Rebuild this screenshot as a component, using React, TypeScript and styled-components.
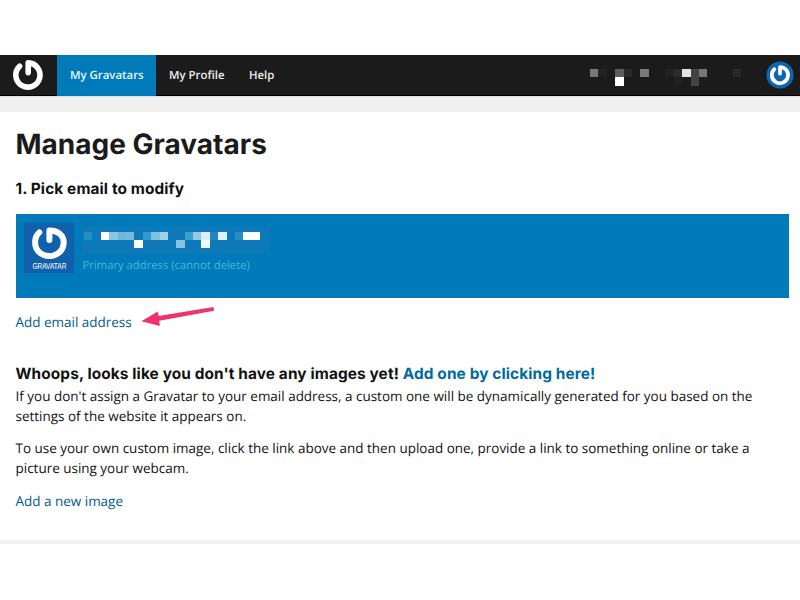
import React from "react";
import styled, { createGlobalStyle } from "styled-components";

const GlobalStyle = createGlobalStyle`
  * { box-sizing: border-box; }
  body { margin: 0; background: #fff; text-rendering: geometricPrecision; }
  h1, h2, h3, p { margin: 0; font-weight: inherit; }
  a { text-decoration: none; color: inherit; }
  svg { overflow: visible; }
`;

const Page = styled.div`
  width: 800px;
  height: 600px;
  overflow: hidden;
  padding-top: 55px;
  background: #fff;
  color: #111;
  font-family: "Open Sans", sans-serif;
`;

const Header = styled.header`
  display: flex;
  align-items: stretch;
  height: 41px;
  background: #1b1b1b;
  box-shadow: inset 0 -1px 0 #000;
`;

const Brand = styled.a`
  width: 57px;
  padding: 5px 0 0 13px;
`;

const NavLink = styled.a<{ $active?: boolean; $width: number }>`
  width: ${(p) => p.$width}px;
  padding-left: 13px;
  background: ${(p) => (p.$active ? "#007ab8" : "transparent")};
  color: ${(p) => (p.$active ? "#e9f5fb" : "#eee")};
  font-size: 11.4px;
  font-weight: 600;
  line-height: 42px;
  white-space: nowrap;
`;

const Account = styled.div`
  display: flex;
  align-items: flex-start;
  margin-left: auto;
  padding: 6px 6px 0 0;
`;

const Mosaic = styled.div<{ $cols: number }>`
  display: grid;
  grid-template-columns: repeat(${(p) => p.$cols}, 8.4px);
  grid-auto-rows: 8.4px;
`;

const Cell = styled.span<{ $color: string; $col: number; $row: number }>`
  grid-column: ${(p) => p.$col + 1};
  grid-row: ${(p) => p.$row + 1};
  background: ${(p) => p.$color};
`;

const AccountName = styled.div`
  padding-top: 8px;
  margin-right: 25px;
`;

const Strip = styled.div`
  height: 16px;
  background: #f0f0f0;
  border-top: 1px solid #dedede;
`;

const Main = styled.main`
  height: 432px;
  padding: 15px 11px 0 15.5px;
  border-bottom: 4px solid #f0f0f0;
`;

const Title = styled.h1`
  font: 700 28px/34px Inter, sans-serif;
  color: #1b1b1b;
  white-space: nowrap;
`;

const Subheading = styled.h2`
  font: 700 15.4px/20px Inter, sans-serif;
  letter-spacing: 0.11px;
  white-space: nowrap;
`;

const Step = styled(Subheading)`
  margin-top: 18px;
`;

const EmailCard = styled.section`
  display: flex;
  height: 84px;
  margin-top: 15px;
  padding: 8.5px;
  background: #007ab8;
`;

const EmailInfo = styled.div`
  margin-left: 8.5px;
`;

const HiddenEmail = styled.div`
  width: 186px;
  height: 26px;
  margin-top: 4px;
  padding: 5px 0 0 1.5px;
  background: #0e78b8;
`;

const Note = styled.p`
  margin-top: 3px;
  color: #45b8e0;
  font-size: 11.27px;
  line-height: 20px;
  white-space: nowrap;
`;

const AddEmail = styled.div`
  display: flex;
  align-items: flex-start;
  height: 24px;
  margin-top: 6px;
`;

const TextLink = styled.a`
  color: #005a92;
  font-size: 13.47px;
  line-height: 20px;
  white-space: nowrap;
`;

const EmailLink = styled(TextLink)`
  width: 125px;
  padding-top: 8px;
`;

const Notice = styled(Subheading)`
  margin-top: 36px;
`;

const NoticeLink = styled.a`
  color: #0069a0;
`;

const Copy = styled.p<{ $top: number }>`
  margin-top: ${(p) => p.$top}px;
  font-size: 13.47px;
  line-height: 20px;
  white-space: nowrap;
`;

const NewImage = styled.div`
  margin-top: 12px;
  line-height: 20px;
`;

type Pixel = [number, number, string];

const namePixels: Pixel[] = [
  [0, 0, "#777"], [1, 0, "#232323"], [3, 0, "#5d5d5d"], [4, 0, "#292929"],
  [6, 0, "#7a7a7a"], [9, 0, "#222"], [10, 0, "#2c2c2c"], [11, 0, "#e3e3e3"],
  [12, 0, "#434343"], [13, 0, "#777"], [17, 0, "#292929"],
  [3, 1, "#fff"], [10, 1, "#202020"], [12, 1, "#434343"],
];

const emailPixels: Pixel[] = [
  [0, 0, "#2290c4"], [2, 0, "#fff"], [3, 0, "#8cc5e1"], [4, 0, "#6db8da"],
  [5, 0, "#78b7d8"], [7, 0, "#2f9bcb"], [8, 0, "#7fc0de"], [9, 0, "#9fd0e5"],
  [12, 0, "#3aa0ce"], [13, 0, "#93cae3"], [14, 0, "#d9eef6"], [15, 0, "#2186bf"],
  [16, 0, "#def1fa"], [18, 0, "#2290c4"], [19, 0, "#fafdfe"], [20, 0, "#fafdfe"],
  [6, 1, "#fff"], [11, 1, "#86c3df"], [14, 1, "#f0f9fc"],
];

const Pixels = ({ cols, data }: { cols: number; data: Pixel[] }) => (
  <Mosaic $cols={cols}>
    {data.map(([col, row, color]) => (
      <Cell key={`${col}-${row}`} $col={col} $row={row} $color={color} />
    ))}
  </Mosaic>
);

const Logo = () => (
  <svg width="30" height="30" viewBox="0 0 30 30" fill="none" stroke="#fff" strokeWidth="5.6" strokeLinecap="round" strokeLinejoin="round">
    <path d="M15.2 12.6V2.9A12.1 12.1 0 1 1 6.6 6.2" />
  </svg>
);

const Avatar = () => (
  <svg width="28" height="28" viewBox="0 0 28 28" fill="none">
    <circle cx="14" cy="14" r="13.6" fill="#1164ae" />
    <path d="M14 12.7V6A8.1 8.1 0 1 1 8.4 8.2" stroke="#fff" strokeWidth="3.7" strokeLinecap="round" strokeLinejoin="round" />
  </svg>
);

const GravatarBadge = () => (
  <svg width="50" height="50" viewBox="0 0 50 50">
    <rect width="50" height="50" fill="#1060ab" />
    <path d="M25.4 17V7.6C34 7.3 39.7 12.6 39.7 19.2C39.7 27.2 33.5 33 25.3 33C17.2 33 11.1 27.2 11.1 19.4C11.1 15.2 12.7 11.8 15.3 9.4" fill="none" stroke="#fff" strokeWidth="6" strokeLinecap="round" strokeLinejoin="round" />
    <text x="8.4" y="46" fill="#fff" fontFamily="Liberation Sans, sans-serif" fontSize="8.6" textLength="34" lengthAdjust="spacingAndGlyphs">GRAVATAR</text>
  </svg>
);

const Arrow = () => (
  <svg width="75" height="24" viewBox="0 0 75 24">
    <path d="M0.3 17.3L16.8 7.4L17.6 12.1L72.4 2.9L73.1 6.7L18.2 16.8L18.9 22Z" fill="#f0326a" />
  </svg>
);

export default function App() {
  return (
    <Page>
      <GlobalStyle />
      <Header>
        <Brand href="#"><Logo /></Brand>
        <NavLink href="#" $active $width={99}>My Gravatars</NavLink>
        <NavLink href="#" $width={80}>My Profile</NavLink>
        <NavLink href="#" $width={60}>Help</NavLink>
        <Account>
          <AccountName><Pixels cols={18} data={namePixels} /></AccountName>
          <Avatar />
        </Account>
      </Header>
      <Strip />
      <Main>
        <Title>Manage Gravatars</Title>
        <Step>1. Pick email to modify</Step>
        <EmailCard>
          <GravatarBadge />
          <EmailInfo>
            <HiddenEmail><Pixels cols={21} data={emailPixels} /></HiddenEmail>
            <Note>Primary address (cannot delete)</Note>
          </EmailInfo>
        </EmailCard>
        <AddEmail>
          <EmailLink href="#">Add email address</EmailLink>
          <Arrow />
        </AddEmail>
        <Notice as="h3">
          Whoops, looks like you don't have any images yet!{" "}
          <NoticeLink href="#">Add one by clicking here!</NoticeLink>
        </Notice>
        <Copy $top={2}>
          If you don't assign a Gravatar to your email address, a custom one will be dynamically generated for you based on the<br />
          settings of the website it appears on.
        </Copy>
        <Copy $top={12}>
          To use your own custom image, click the link above and then upload one, provide a link to something online or take a<br />
          picture using your webcam.
        </Copy>
        <NewImage><TextLink href="#">Add a new image</TextLink></NewImage>
      </Main>
    </Page>
  );
}
